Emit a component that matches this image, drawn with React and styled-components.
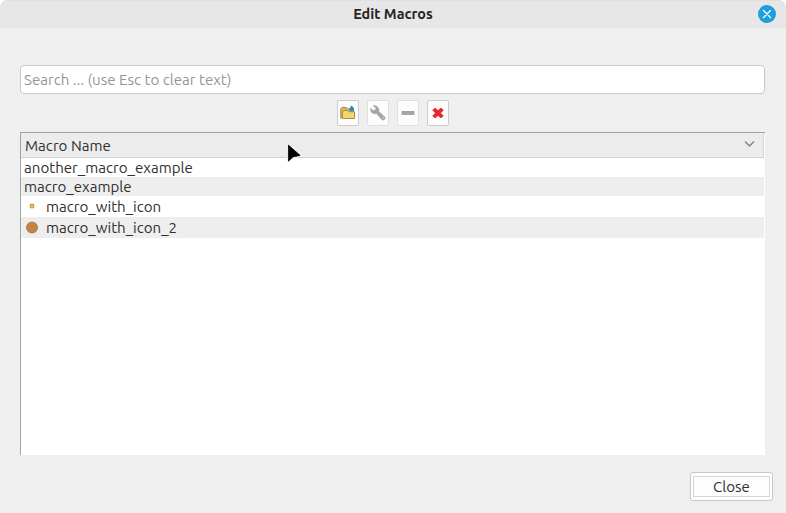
import React from "react";
import styled, { createGlobalStyle } from "styled-components";

const GlobalStyle = createGlobalStyle`
  * { box-sizing: border-box; }
  body { margin: 0; background: #fff; overflow: hidden; }
`;

const Dialog = styled.main`
  display: flex;
  flex-direction: column;
  width: 786px;
  height: 513px;
  overflow: hidden;
  border-radius: 7px 7px 0 0;
  background: #efefef;
  color: #303030;
  font: 15.1px "Ubuntu", "Noto Sans", "Open Sans", sans-serif;
`;

const TitleBar = styled.header`
  display: grid;
  grid-template-columns: 1fr auto 1fr;
  align-items: center;
  flex: none;
  height: 28px;
  padding: 0 10px;
  background: #e7e7e7;
  border-top: 1px solid #e0e0e0;
  border-radius: 7px 7px 0 0;
`;

const Title = styled.h1`
  grid-column: 2;
  margin: -1px 0 0;
  color: #252525;
  font-size: 14.4px;
  font-weight: 700;
  line-height: 26px;
`;

const TitleClose = styled.button`
  justify-self: end;
  width: 18px;
  height: 18px;
  margin-top: -1px;
  padding: 0;
  border: 0;
  border-radius: 50%;
  background: #1f9ede;
  svg { display: block; }
`;

const Label = styled.span`
  display: block;
  white-space: pre;
`;

const Content = styled.section`
  display: flex;
  flex-direction: column;
  padding: 37px 21px 0 20px;
`;

const SearchField = styled.div`
  height: 29px;
  padding: 0 3px;
  border: 1px solid #c9c9c9;
  border-radius: 4px;
  background: #fff;
  color: #969696;
  line-height: 27px;
`;

const Toolbar = styled.div`
  display: flex;
  gap: 8px;
  margin: 6px 0 6px 317px;
`;

const ToolButton = styled.button`
  display: grid;
  place-items: center;
  width: 22px;
  height: 26px;
  padding: 0;
  border: 1px solid ${(p) => (p.disabled ? "#dfdfdf" : "#cdcdcd")};
  border-radius: 2px;
  background: #fcfdfc;
  svg { display: block; }
`;

const Table = styled.div`
  height: 323px;
  border-top: 1px solid #a3a3a3;
  border-left: 1px solid #a3a3a3;
  background: #fff;
`;

const TableHeader = styled.div`
  display: flex;
  justify-content: space-between;
  height: 25px;
  margin-right: 1px;
  padding: 0 8px 0 4px;
  border-right: 1px solid #d2d2d2;
  border-bottom: 1px solid #d2d2d2;
  background: #ececec;
  line-height: 25px;
  svg { display: block; margin-top: 6px; }
`;

const Row = styled.div`
  display: flex;
  align-items: center;
  height: ${(p) => p.$height}px;
  margin-right: 1px;
  padding-left: 3px;
  background: ${(p) => (p.$striped ? "#eeeeee" : "#fff")};
  line-height: ${(p) => p.$height}px;
`;

const IconSlot = styled.span`
  width: 16px;
  margin-right: 6px;
  svg { display: block; }
`;

const Footer = styled.footer`
  display: flex;
  justify-content: flex-end;
  padding: 17px 13px 0 0;
`;

const CloseButton = styled.button`
  width: 83px;
  height: 29px;
  padding: 3px 2px;
  border: 1px solid #c8c8c8;
  border-radius: 3px;
  background: #fff;
  color: inherit;
  font: inherit;
`;

const FocusFrame = styled.span`
  display: flex;
  justify-content: center;
  height: 21px;
  border: 1px solid #d6d6d6;
  background: #fcfdfc;
  line-height: 20px;
`;

const Pointer = styled.svg`
  position: absolute;
  left: 286px;
  top: 143px;
`;

const FolderIcon = () => (
  <svg width="16" height="16" viewBox="0 0 16 16">
    <path d="M.8 13.5V3.6l1-1.1h4.5l1 1.5h6.2v3" fill="#d7b568" stroke="#a68b4c" />
    <path d="M4 5.5h3.5l1 1.2h6v6.8h-12V7Z" fill="#f2d66e" stroke="#ac8c40" />
    <path d="M11.7.5c1 1.4 2.5 2.4 2.5 3.8 0 2.4-5 2.4-5 0 0-1.4 1.5-2.4 2.5-3.8Z" fill="#268bcb" />
  </svg>
);

const WrenchIcon = () => (
  <svg width="16" height="16" viewBox="0 0 16 16">
    <path d="M3 .7 6 3.3 5.2 5 3.2 5.6.6 3.1C0 5.8 1.3 8.2 3.8 8.8c1 .2 1.8.1 2.5-.2l5.2 5.8c1 1 2.3 1 3.1.2.9-.9.8-2.2-.2-3.1L8.8 6.3c.5-1.3.2-2.6-.6-3.7C7.1.9 5.2.1 3 .7Zm10 11.5a.8.8 0 1 1 0 1.6.8.8 0 0 1 0-1.6Z" fill="#a5a5a5" stroke="#a5a5a5" strokeWidth=".35" fillRule="evenodd" />
  </svg>
);

const MinusIcon = () => (
  <svg width="16" height="16" viewBox="0 0 16 16">
    <rect x="1.5" y="6" width="13" height="4" rx=".5" fill="#a5a7a5" />
  </svg>
);

const DeleteIcon = () => (
  <svg width="16" height="16" viewBox="0 0 16 16">
    <path d="m5 3 3 2.6L11 3l2.3 2.2L10.5 8l2.8 2.8L11 13l-3-2.6L5 13l-2.3-2.2L5.5 8 2.7 5.2Z" fill="#e9252b" stroke="#d61f28" strokeWidth=".6" />
  </svg>
);

const MacroDot = ({ large }) => (
  <svg width="16" height="16" viewBox="0 0 16 16">
    {large
      ? <circle cx="8" cy="7.5" r="5.6" fill="#c68340" stroke="#94816a" strokeWidth=".8" />
      : <rect x="6.2" y="5.2" width="3.6" height="3.6" rx=".7" fill="#f9c51a" stroke="#a58b43" strokeWidth=".9" />}
  </svg>
);

const macros = [
  { name: "another_macro_example", height: 19 },
  { name: "macro_example", height: 19 },
  { name: "macro_with_icon", height: 21, icon: "small" },
  { name: "macro_with_icon_2", height: 21, icon: "large" },
];

export default function App() {
  return (
    <>
      <GlobalStyle />
      <Dialog>
        <TitleBar>
          <Title>Edit Macros</Title>
          <TitleClose aria-label="Close dialog">
            <svg width="18" height="18" viewBox="0 0 18 18">
              <path d="m5.5 5.5 7 7m0-7-7 7" stroke="#fff" strokeWidth="1.4" strokeLinecap="round" />
            </svg>
          </TitleClose>
        </TitleBar>
        <Content>
          <SearchField><Label>Search ... (use Esc to clear text)</Label></SearchField>
          <Toolbar>
            <ToolButton aria-label="New macro"><FolderIcon /></ToolButton>
            <ToolButton aria-label="Edit macro" disabled><WrenchIcon /></ToolButton>
            <ToolButton aria-label="Remove macro" disabled><MinusIcon /></ToolButton>
            <ToolButton aria-label="Delete macro"><DeleteIcon /></ToolButton>
          </Toolbar>
          <Table>
            <TableHeader>
              <Label>Macro Name</Label>
              <svg width="12" height="10" viewBox="0 0 12 10">
                <path d="m2 2.5 4.5 4.5L11 2.5" fill="none" stroke="#858585" strokeWidth="1.5" />
              </svg>
            </TableHeader>
            {macros.map((macro, index) => (
              <Row key={macro.name} $height={macro.height} $striped={index % 2 === 1}>
                {macro.icon && <IconSlot><MacroDot large={macro.icon === "large"} /></IconSlot>}
                <Label>{macro.name}</Label>
              </Row>
            ))}
          </Table>
        </Content>
        <Footer>
          <CloseButton><FocusFrame><Label>Close</Label></FocusFrame></CloseButton>
        </Footer>
      </Dialog>
      <Pointer width="18" height="24" viewBox="0 0 18 24">
        <path d="M2.4 2v16.2l4.6-4.3 7.2-1.5Z" fill="#000" stroke="#fff" strokeWidth="2.6" strokeLinejoin="round" />
        <path d="M2.4 2v16.2l4.6-4.3 7.2-1.5Z" fill="#000" stroke="#000" strokeWidth=".8" strokeLinejoin="round" />
      </Pointer>
    </>
  );
}
